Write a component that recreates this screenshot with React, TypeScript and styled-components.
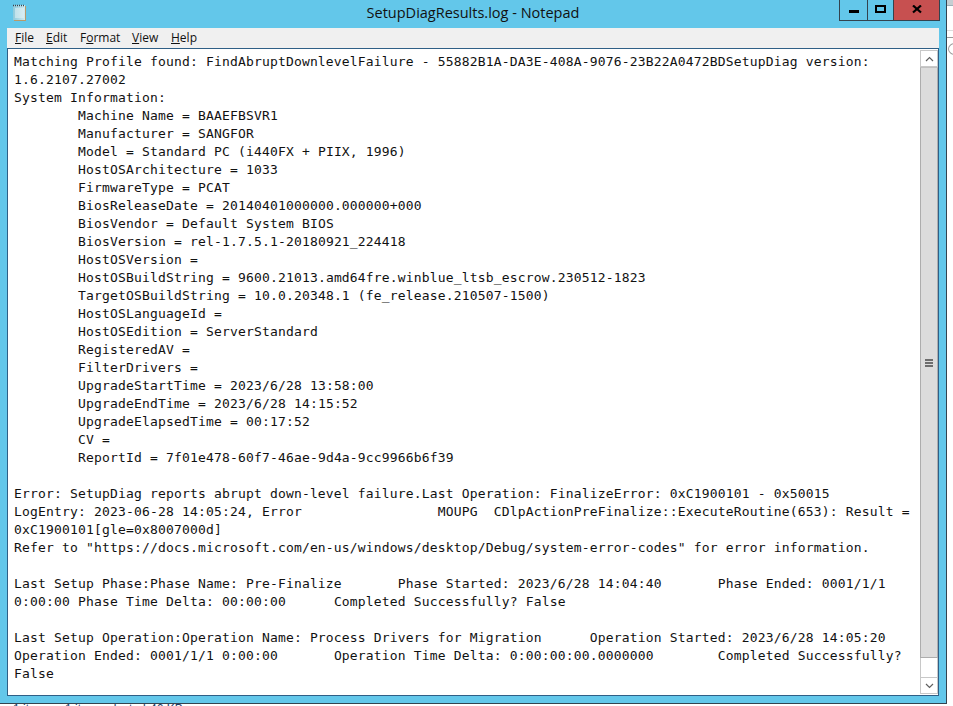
import React from "react";
import styled, { createGlobalStyle } from "styled-components";

const Global = createGlobalStyle`
  html, body { margin: 0; padding: 0; background: #fff; }
  #root { width: 953px; height: 706px; overflow: hidden; }
`;

const Desktop = styled.div`
  width: 953px;
  height: 706px;
  display: grid;
  grid-template-columns: 947px 6px;
  grid-template-rows: 704px 2px;
  overflow: hidden;
  background: #fff;
`;

const Frame = styled.div`
  background: #63c7ea;
  border-right: 1px solid #33434f;
  border-bottom: 1px solid #33434f;
  display: flex;
  flex-direction: column;
  padding: 0 7px 7px 7px;
  min-height: 0;
`;

const TitleBar = styled.div`
  height: 28px;
  margin-left: -7px;
  margin-right: -1px;
  flex: none;
  display: grid;
  grid-template-columns: 1fr auto;
  position: relative;
`;

const AppIcon = styled.svg`
  position: absolute;
  left: 11px;
  top: 4px;
`;

const Title = styled.div`
  position: absolute;
  left: 0;
  width: 946px;
  top: 2px;
  text-align: center;
  font: 14.5px/22px "Open Sans", "Noto Sans", sans-serif;
  color: #111;
`;

const Controls = styled.div`
  grid-column: 2;
  display: flex;
  height: 20px;
  border: 1px solid #33434f;
  border-top: 0;
  position: relative;
`;

const Control = styled.div<{ $w: number; $close?: boolean }>`
  width: ${(p) => p.$w}px;
  background: ${(p) => (p.$close ? "#c75050" : "transparent")};
  border-right: ${(p) => (p.$close ? "0" : "1px solid #33434f")};
  display: flex;
  align-items: center;
  justify-content: center;
`;

const MenuBar = styled.div`
  height: 21px;
  flex: none;
  background: #f0f0f0;
  display: flex;
  align-items: center;
  border-bottom: 1px solid #2f5f86;
  box-sizing: border-box;
  padding-left: 8px;
  font: 12px/20px "Open Sans", "Noto Sans", sans-serif;
  color: #111;
`;

const MenuItem = styled.span<{ $w: number }>`
  width: ${(p) => p.$w}px;
  u { text-underline-offset: 1px; }
`;

const Body = styled.div`
  flex: 1;
  min-height: 0;
  display: flex;
  background: #fff;
  border-left: 1px solid #2f5f86;
  border-right: 1px solid #2f5f86;
  border-bottom: 1px solid #2f5f86;
`;

const Log = styled.pre`
  flex: 1;
  margin: 0;
  padding: 4px 0 0 6px;
  overflow: hidden;
  font-family: "DejaVu Sans Mono", monospace;
  font-size: 13px;
  letter-spacing: 0.17px;
  line-height: 18px;
  tab-size: 8;
  color: #111;
`;

const Scrollbar = styled.div`
  width: 18px;
  flex: none;
  box-sizing: border-box;
  padding: 1px 0;
  display: flex;
  flex-direction: column;
  background: #fff;
`;

const Arrow = styled.div`
  height: 17px;
  flex: none;
  box-sizing: border-box;
  border: 1px solid #c8c8c8;
  display: flex;
  align-items: center;
  justify-content: center;
  background: #fff;
`;

const Thumb = styled.div`
  height: 591px;
  flex: none;
  box-sizing: border-box;
  background: #dcdcdc;
  border: 1px solid #adadad;
  border-top-color: #c0c0c0;
  display: flex;
  align-items: center;
  justify-content: center;
`;

const Track = styled.div`
  flex: 1;
  border-left: 1px solid #c8c8c8;
  border-right: 1px solid #c8c8c8;
`;

const BackdropSide = styled.div`
  background: #fff;
  grid-row: 1 / 3;
  grid-column: 2;
  overflow: hidden;
`;

const SideTop = styled.div`
  height: 5px;
  background: #c5ced2;
  border-bottom: 1px solid #9fb0b8;
`;

const SideLine = styled.div<{ $gap: number; $color: string }>`
  height: 1px;
  margin-top: ${(p) => p.$gap}px;
  background: ${(p) => p.$color};
`;

const SideCircle = styled.div`
  width: 12px;
  height: 10px;
  margin: 5px 0 0 1px;
  border: 1px solid #9a9a9a;
  border-radius: 50%;
`;

const StatusStrip = styled.div`
  overflow: hidden;
  height: 2px;
  font: 12px/12px "Liberation Sans", sans-serif;
  color: #223a66;
  white-space: pre;
`;

const StatusRow = styled.div`
  margin-top: -1px;
  display: flex;
`;

const StatusCell = styled.span<{ $w: number }>`
  width: ${(p) => p.$w}px;
  flex: none;
`;

const text = `Matching Profile found: FindAbruptDownlevelFailure - 55882B1A-DA3E-408A-9076-23B22A0472BDSetupDiag version:
1.6.2107.27002
System Information:
\tMachine Name = BAAEFBSVR1
\tManufacturer = SANGFOR
\tModel = Standard PC (i440FX + PIIX, 1996)
\tHostOSArchitecture = 1033
\tFirmwareType = PCAT
\tBiosReleaseDate = 20140401000000.000000+000
\tBiosVendor = Default System BIOS
\tBiosVersion = rel-1.7.5.1-20180921_224418
\tHostOSVersion =
\tHostOSBuildString = 9600.21013.amd64fre.winblue_ltsb_escrow.230512-1823
\tTargetOSBuildString = 10.0.20348.1 (fe_release.210507-1500)
\tHostOSLanguageId =
\tHostOSEdition = ServerStandard
\tRegisteredAV =
\tFilterDrivers =
\tUpgradeStartTime = 2023/6/28 13:58:00
\tUpgradeEndTime = 2023/6/28 14:15:52
\tUpgradeElapsedTime = 00:17:52
\tCV =
\tReportId = 7f01e478-60f7-46ae-9d4a-9cc9966b6f39

Error: SetupDiag reports abrupt down-level failure.Last Operation: FinalizeError: 0xC1900101 - 0x50015
LogEntry: 2023-06-28 14:05:24, Error                 MOUPG  CDlpActionPreFinalize::ExecuteRoutine(653): Result =
0xC1900101[gle=0x8007000d]
Refer to "https://docs.microsoft.com/en-us/windows/desktop/Debug/system-error-codes" for error information.

Last Setup Phase:Phase Name: Pre-Finalize\tPhase Started: 2023/6/28 14:04:40\tPhase Ended: 0001/1/1
0:00:00 Phase Time Delta: 00:00:00\tCompleted Successfully? False

Last Setup Operation:Operation Name: Process Drivers for Migration\tOperation Started: 2023/6/28 14:05:20
Operation Ended: 0001/1/1 0:00:00\tOperation Time Delta: 0:00:00:00.0000000\tCompleted Successfully?
False`;

const NotepadIcon = () => (
  <AppIcon width="16" height="18" viewBox="0 0 16 18">
    <defs>
      <linearGradient id="paper" x1="0" x2="1" y1="0" y2="0">
        <stop offset="0" stopColor="#8fcbdc" />
        <stop offset="1" stopColor="#cfe9ef" />
      </linearGradient>
    </defs>
    <rect x="2" y="1" width="12" height="15" fill="url(#paper)" />
    <rect x="14" y="2" width="1" height="15" fill="#b99a6a" />
    <rect x="3" y="16" width="12" height="1" fill="#b99a6a" />
    <path d="M2 1.5h12" stroke="#3a4650" strokeWidth="1.4" strokeDasharray="1 1" />
    <path d="M4 5h9M4 7h9M4 9h9M4 11h9M4 13h9" stroke="#e6f3f6" strokeWidth="1" />
  </AppIcon>
);

const Chevron = ({ down }: { down?: boolean }) => (
  <svg width="9" height="6" viewBox="0 0 9 6">
    <path d={down ? "M1 1l3.5 3.5L8 1" : "M1 5l3.5-3.5L8 5"} fill="none" stroke="#606060" strokeWidth="1.2" />
  </svg>
);

const menu: [string, number][] = [
  ["File", 31],
  ["Edit", 34],
  ["Format", 52],
  ["View", 39],
  ["Help", 40],
];

export default function App() {
  return (
    <Desktop>
      <Global />
      <Frame>
        <TitleBar>
          <NotepadIcon />
          <Title>SetupDiagResults.log - Notepad</Title>
          <Controls>
            <Control $w={27}>
              <svg width="10" height="6" viewBox="0 0 10 6"><rect width="10" height="3" y="3" fill="#000" /></svg>
            </Control>
            <Control $w={25}>
              <svg width="11" height="10" viewBox="0 0 11 10"><rect x="1" y="1" width="9" height="6" fill="none" stroke="#000" strokeWidth="2" /></svg>
            </Control>
            <Control $w={45} $close>
              <svg width="10" height="10" viewBox="0 0 10 10"><path d="M1 .5l8 7M9 .5l-8 7" stroke="#000" strokeWidth="2.2" /></svg>
            </Control>
          </Controls>
        </TitleBar>
        <MenuBar>
          {menu.map(([label, w]) => {
            const key = label === "Format" ? 1 : 0;
            return (
              <MenuItem key={label} $w={w}>
                {label.slice(0, key)}
                <u>{label[key]}</u>
                {label.slice(key + 1)}
              </MenuItem>
            );
          })}
        </MenuBar>
        <Body>
          <Log>{text}</Log>
          <Scrollbar>
            <Arrow><Chevron /></Arrow>
            <Thumb>
              <svg width="8" height="8" viewBox="0 0 8 8">
                <path d="M0 1h8M0 4h8M0 7h8" stroke="#6d6d6d" strokeWidth="2" />
              </svg>
            </Thumb>
            <Track />
            <Arrow><Chevron down /></Arrow>
          </Scrollbar>
        </Body>
      </Frame>
      <BackdropSide>
        <SideTop />
        <SideLine $gap={24} $color="#dddddd" />
        <SideLine $gap={6} $color="#9a9a9a" />
        <SideCircle />
      </BackdropSide>
      <StatusStrip>
        <StatusRow>
          <StatusCell $w={13}>s</StatusCell>
          <StatusCell $w={52}>1 item</StatusCell>
          <StatusCell $w={85}>1 item selected</StatusCell>
          <StatusCell $w={60}>46 KB</StatusCell>
        </StatusRow>
      </StatusStrip>
    </Desktop>
  );
}
